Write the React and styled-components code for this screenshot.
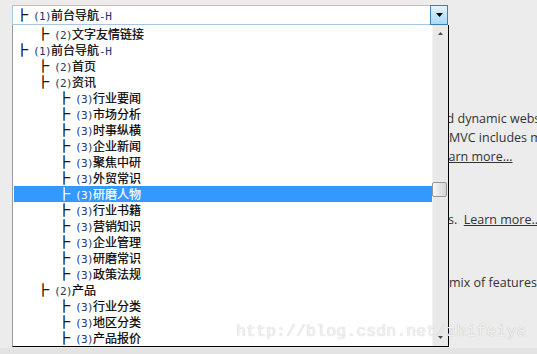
import styled, { createGlobalStyle } from "styled-components";

const GlobalStyle = createGlobalStyle`
  html, body {
    margin: 0;
    padding: 0;
  }
  body {
    background: #ececec;
    font-family: "Noto Sans CJK SC", "Noto Sans", sans-serif;
    overflow: hidden;
  }
`;

const Page = styled.div`
  position: relative;
  width: 537px;
  height: 354px;
  display: flex;
  flex-direction: column;
  overflow: hidden;
`;

const Stage = styled.div`
  flex: 1;
  display: flex;
  flex-direction: column;
`;

const Footer = styled.div`
  height: 6px;
  background: #e3e3e3;
`;

const ComboWrap = styled.div`
  position: relative;
  z-index: 2;
  margin: 5px 0 0 12px;
  width: 436px;
`;

const ComboBox = styled.div`
  display: flex;
  height: 20px;
  box-sizing: border-box;
  border: 1px solid #a9c4e0;
  background: #fff;
`;

const ComboValue = styled.div`
  flex: 1;
  padding-left: 8px;
  line-height: 18px;
  font-size: 12px;
  color: #000;
  white-space: nowrap;
  -webkit-text-stroke: 0.2px currentColor;
`;

const ArrowButton = styled.div`
  width: 18px;
  height: 20px;
  margin: -1px -1px -1px 0;
  box-sizing: border-box;
  border: 1px solid #3c7fb1;
  background: linear-gradient(#e8f5fd, #c4e5f7 50%, #a9daf5);
  display: flex;
  align-items: center;
  justify-content: center;
`;

const DropList = styled.div`
  position: absolute;
  top: 100%;
  left: 0;
  width: 437px;
  height: 322px;
  box-sizing: border-box;
  border-left: 1px solid #9d9d9d;
  border-right: 1px solid #000;
  border-bottom: 1px solid #000;
  background: #fff;
  display: flex;
`;

const Rows = styled.div`
  flex: 1;
  padding: 1px 0 0 1px;
  overflow: hidden;
`;

const Row = styled.div`
  height: 16px;
  line-height: 16px;
  padding-left: ${({ $level }) => 7 + ($level - 1) * 21}px;
  font-size: 12px;
  white-space: nowrap;
  -webkit-text-stroke: 0.2px currentColor;
  color: ${({ $selected }) => ($selected ? "#fff" : "#000")};
  background: ${({ $selected }) => ($selected ? "#3399ff" : "transparent")};
`;

const Connector = styled.span`
  display: inline-block;
  width: 12px;
  text-indent: -5px;
  -webkit-text-stroke: 0.5px currentColor;
`;

const Half = styled.span`
  font-family: "DejaVu Sans Mono", monospace;
  font-size: 11px;
  letter-spacing: -0.6px;
  -webkit-text-stroke: 0;
  color: ${({ $selected }) => ($selected ? "#fff" : "#22386a")};
`;

const ScrollBar = styled.div`
  width: 16px;
  display: flex;
  flex-direction: column;
  background: #e9e9e9;
  box-shadow: inset 1px 0 0 #f3f3f3;
`;

const ScrollArrow = styled.div`
  height: 17px;
  display: flex;
  align-items: center;
  justify-content: center;
`;

const Track = styled.div`
  flex: 1;
`;

const Thumb = styled.div`
  width: 15px;
  height: 15px;
  box-sizing: border-box;
  border: 1px solid #979797;
  border-radius: 2px;
  background: linear-gradient(90deg, #f7f7f7, #e6e6e6 50%, #d4d4d4);
`;

const BgText = styled.div`
  margin: 84px 0 0 449px;
  font-family: "Open Sans", "Noto Sans", sans-serif;
  font-size: 12.5px;
  line-height: 19px;
  color: #333;
  white-space: nowrap;
`;

const BgPara = styled.div`
  margin-top: ${({ $gap }) => $gap}px;
`;

const BgLine = styled.div`
  margin-left: ${({ $shift }) => $shift}px;
`;

const BgLink = styled.span`
  text-decoration: underline;
  color: #333;
`;

const Watermark = styled.div`
  position: absolute;
  left: 236px;
  top: 322px;
  z-index: 5;
  font-family: "Liberation Mono", monospace;
  font-size: 16.7px;
  line-height: 20px;
  color: rgba(246, 246, 246, 0.92);
  text-shadow: 0 0 1px rgba(0, 0, 0, 0.26);
  pointer-events: none;
`;

const rows = [
  { level: 2, label: "文字友情链接" },
  { level: 1, label: "前台导航-H" },
  { level: 2, label: "首页" },
  { level: 2, label: "资讯" },
  { level: 3, label: "行业要闻" },
  { level: 3, label: "市场分析" },
  { level: 3, label: "时事纵横" },
  { level: 3, label: "企业新闻" },
  { level: 3, label: "聚焦中研" },
  { level: 3, label: "外贸常识" },
  { level: 3, label: "研磨人物", selected: true },
  { level: 3, label: "行业书籍" },
  { level: 3, label: "营销知识" },
  { level: 3, label: "企业管理" },
  { level: 3, label: "研磨常识" },
  { level: 3, label: "政策法规" },
  { level: 2, label: "产品" },
  { level: 3, label: "行业分类" },
  { level: 3, label: "地区分类" },
  { level: 3, label: "产品报价" },
];

// ascii runs get the half-width font, like the old bitmap song font
const Label = ({ text, selected }) =>
  text.split(/([\x20-\x7e]+)/).map((part, i) =>
    /^[\x20-\x7e]+$/.test(part) ? (
      <Half key={i} $selected={selected}>
        {part}
      </Half>
    ) : (
      part
    )
  );

const TreeItem = ({ level, label, selected }) => (
  <>
    <Connector>├</Connector>
    <Half $selected={selected}>({level})</Half>
    <Label text={label} selected={selected} />
  </>
);

const Triangle = ({ up, w = 7, h = 4, color = "#000" }) => (
  <svg width={w} height={h} viewBox={`0 0 ${w} ${h}`}>
    <path
      d={up ? `M0 ${h}L${w / 2} 0L${w} ${h}Z` : `M0 0L${w} 0L${w / 2} ${h}Z`}
      fill={color}
    />
  </svg>
);

const App = () => {
  const scrollPos = 0.515;
  const thumbTop = Math.round(scrollPos * (287 - 15));

  return (
    <>
      <GlobalStyle />
      <Page>
        <Stage>
          <ComboWrap>
            <ComboBox>
              <ComboValue>
                <TreeItem level={1} label="前台导航-H" />
              </ComboValue>
              <ArrowButton>
                <Triangle />
              </ArrowButton>
            </ComboBox>
            <DropList>
              <Rows>
                {rows.map((r, i) => (
                  <Row key={i} $level={r.level} $selected={r.selected}>
                    <TreeItem {...r} />
                  </Row>
                ))}
              </Rows>
              <ScrollBar>
                <ScrollArrow>
                  <Triangle up w={5} h={3} color="#4a4a4a" />
                </ScrollArrow>
                <Track>
                  <Thumb style={{ marginTop: thumbTop }} />
                </Track>
                <ScrollArrow>
                  <Triangle w={5} h={3} color="#4a4a4a" />
                </ScrollArrow>
              </ScrollBar>
            </DropList>
          </ComboWrap>
          <BgText>
            <BgPara $gap={0}>
              <BgLine $shift={-17}>and dynamic websites</BgLine>
              <BgLine $shift={0}>MVC includes many</BgLine>
              <BgLine $shift={-14}>
                <BgLink>Learn more…</BgLink>
              </BgLine>
            </BgPara>
            <BgPara $gap={44}>
              <BgLine $shift={-1}>
                s.&nbsp;&nbsp;<BgLink>Learn more…</BgLink>
              </BgLine>
            </BgPara>
            <BgPara $gap={44}>
              <BgLine $shift={0}>mix of features</BgLine>
            </BgPara>
          </BgText>
        </Stage>
        <Footer />
        <Watermark>http://blog.csdn.net/zhifeiya</Watermark>
      </Page>
    </>
  );
};

export default App;
